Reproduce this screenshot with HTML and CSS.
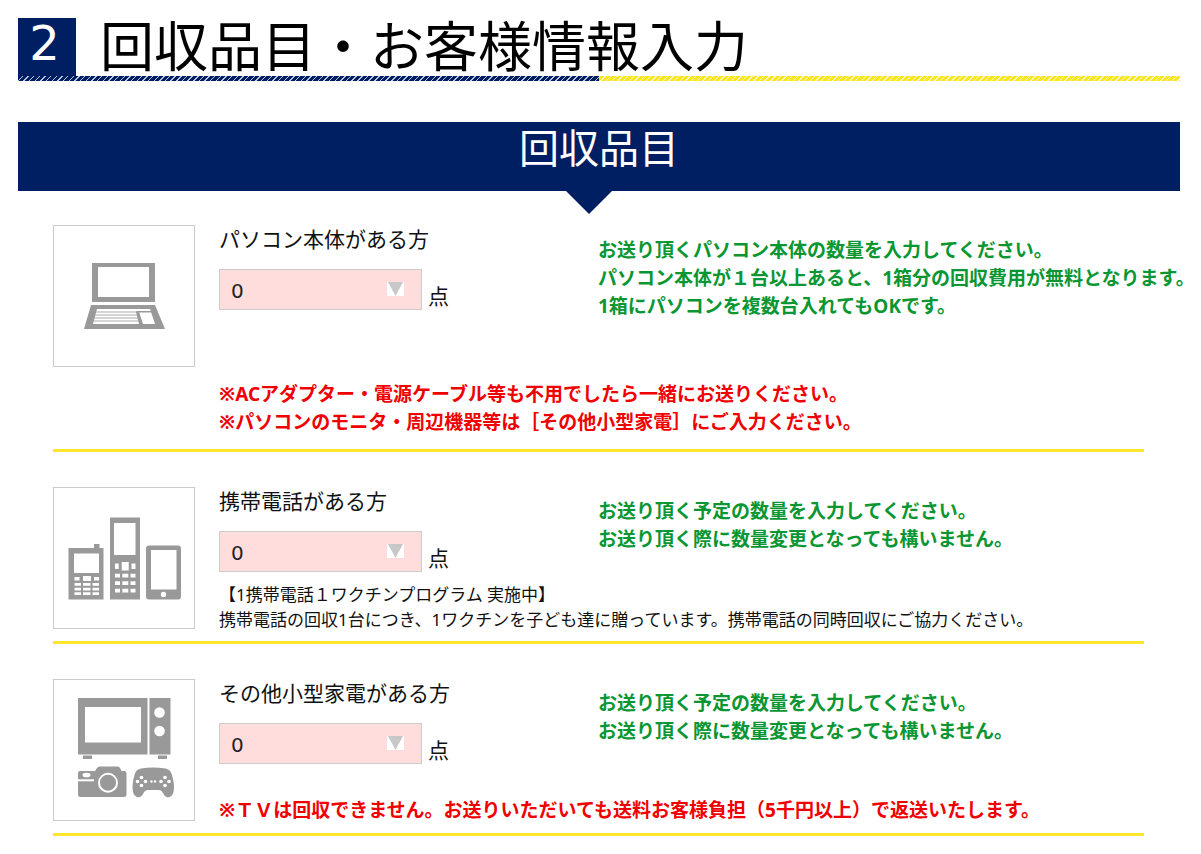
FILE: index.html
```html
<!doctype html>
<html lang="ja">

<head>
  <meta charset="UTF-8">
  <meta name="viewport" content="width=device-width, initial-scale=1">
  <title>回収品目・お客様情報入力</title>
  <link rel="stylesheet" href="styles.css">
</head>

<body>
  <main class="page">
    <h1 class="step">
      <span class="step-num">2</span>
      <span class="step-title">回収品目・お客様情報入力</span>
    </h1>

    <h2 class="banner">回収品目</h2>

    <form class="items">
      <!-- PC -->
      <section class="item item-tall">
        <div class="item-icon">
          <svg viewBox="1 1 140 140" aria-hidden="true">
            <path class="ink" fill-rule="evenodd" d="M39 38h63v39H39zM45 42v30h51V42z" />
            <path class="ink" d="M38 80h64l10 24H31z" />
            <path class="paper" d="M44 84h53l5 15H40z" />
            <path class="keys" d="M43 87h41M42 90h43M41 93h45M41 96h46" />
            <path class="ink" d="M83 87h3l4 12h-4z" />
            <path class="ink" d="M83 86h15l.5 1.500H84z" />
          </svg>
        </div>
        <div class="item-main">
          <label class="item-name" for="pc">パソコン本体がある方</label>
          <div class="field">
            <div class="select">
              <select id="pc">
                <option>0</option>
                <option>1</option>
                <option>2</option>
                <option>3</option>
              </select>
              <svg class="arrow" viewBox="0 0 17 14" aria-hidden="true"><path d="M1 0h15L8.500 14z" /></svg>
            </div>
            <span class="unit">点</span>
          </div>
        </div>
        <p class="hint">お送り頂くパソコン本体の数量を入力してください。<br>パソコン本体が１台以上あると、1箱分の回収費用が無料となります。<br>1箱にパソコンを複数台入れてもOKです。</p>
        <p class="note alert">※ACアダプター・電源ケーブル等も不用でしたら一緒にお送りください。<br>※パソコンのモニタ・周辺機器等は［その他小型家電］にご入力ください。</p>
      </section>

      <!-- Mobile phone -->
      <section class="item">
        <div class="item-icon">
          <svg viewBox="1 1 140 140" aria-hidden="true">
            <path class="ink" d="M15.500 61H41v-4h5.500v4h4v51.500h-35zM57 30.500h30v82H57z" />
            <rect class="ink" x="93" y="58.500" width="35" height="54" rx="3" />
            <path class="paper" d="M21 66.500h25V86H21zM61 36h21.500v32H61zM98 63h25.500v39.500H98z" />
            <circle class="paper" cx="110.500" cy="107.500" r="2.700" />
            <!-- left keypad -->
            <path class="paper" d="M21.500 90h5v3.500h-5zM30 89h8v5h-8zM41 90h5v3.500h-5z
              M21.500 96h6.500v2.700h-6.500zM30 96h7.500v2.700H30zM39.500 96H46v2.700h-6.500z
              M21.500 100.700h6.500v2.700h-6.500zM30 100.700h7.500v2.700H30zM39.500 100.700H46v2.700h-6.500z
              M21.500 105.300h6.500v2.700h-6.500zM30 105.300h7.500v2.700H30zM39.500 105.300H46v2.700h-6.500z" />
            <!-- centre keypad -->
            <path class="paper" d="M62 76.500h3.700V82H62zM68.700 75h7v8.500h-7zM78.500 76.500h4V82h-4z
              M62 86.700h5v3.700h-5zM69.300 86.700h6v3.700h-6zM77.500 86.700h5v3.700h-5z
              M62 94.200h5v3.700h-5zM69.300 94.200h6v3.700h-6zM77.500 94.200h5v3.700h-5z
              M62 101.700h5v3.700h-5zM69.300 101.700h6v3.700h-6zM77.500 101.700h5v3.700h-5z" />
          </svg>
        </div>
        <div class="item-main">
          <label class="item-name" for="mobile">携帯電話がある方</label>
          <div class="field">
            <div class="select">
              <select id="mobile">
                <option>0</option>
                <option>1</option>
                <option>2</option>
                <option>3</option>
              </select>
              <svg class="arrow" viewBox="0 0 17 14" aria-hidden="true"><path d="M1 0h15L8.500 14z" /></svg>
            </div>
            <span class="unit">点</span>
          </div>
        </div>
        <p class="hint">お送り頂く予定の数量を入力してください。<br>お送り頂く際に数量変更となっても構いません。</p>
        <p class="note">【1携帯電話１ワクチンプログラム 実施中】<br>携帯電話の回収1台につき、1ワクチンを子ども達に贈っています。携帯電話の同時回収にご協力ください。</p>
      </section>

      <!-- Other small appliances -->
      <section class="item">
        <div class="item-icon">
          <svg viewBox="1 1 140 140" aria-hidden="true">
            <path class="ink" d="M25 19h69.500v56.500H25zM96.500 19h21v56.500h-21zM30 76.500h9V80h-9zM105 76.500h9V80h-9z" />
            <path class="paper" d="M32 28h56v35.500H32z" />
            <circle class="paper" cx="106.500" cy="33.500" r="5.300" />
            <circle class="paper" cx="106.500" cy="52" r="5.300" />
            <!-- camera -->
            <path class="ink" d="M27 92h15l2-3q1-1.500 2.500-1.500h18q2 0 2.500 1.500l1.500 3H71q2.500 0 2.500 2.500v21q0 2.500-2.500 2.500H27.500q-2.500 0-2.500-2.500V94q0-2 2-2z" />
            <ellipse class="paper" cx="33.500" cy="96" rx="4" ry="2.300" />
            <path class="line" d="M25 101.300h16" />
            <circle class="line" cx="55" cy="103.700" r="9" />
            <!-- game pad -->
            <path class="ink" d="M88 89.500q12-2 24.500 0c4 1 5.500 3 6.500 6.500 2 7 2.500 12 1.500 17-1 5-6 7-9 3.500l-2.500-4q-1-1.500-3-1.500H94.500q-2 0-3 1.500l-2.500 4c-3 3.500-8 1.500-9-3.500-1-5-.5-10 1.500-17 1-3.500 2.500-5.500 6.500-6.500z" />
            <g class="paper">
              <circle cx="88.500" cy="98.500" r="1.800" />
              <circle cx="84.500" cy="102.500" r="1.800" />
              <circle cx="92.500" cy="102.500" r="1.800" />
              <circle cx="88.500" cy="106.500" r="1.800" />
              <circle cx="112" cy="98.500" r="1.800" />
              <circle cx="108" cy="102.500" r="1.800" />
              <circle cx="116" cy="102.500" r="1.800" />
              <circle cx="112" cy="106.500" r="1.800" />
              <circle cx="98.500" cy="102.500" r="1.200" />
              <circle cx="102" cy="102.500" r="1.200" />
            </g>
          </svg>
        </div>
        <div class="item-main">
          <label class="item-name" for="other">その他小型家電がある方</label>
          <div class="field">
            <div class="select">
              <select id="other">
                <option>0</option>
                <option>1</option>
                <option>2</option>
                <option>3</option>
              </select>
              <svg class="arrow" viewBox="0 0 17 14" aria-hidden="true"><path d="M1 0h15L8.500 14z" /></svg>
            </div>
            <span class="unit">点</span>
          </div>
        </div>
        <p class="hint">お送り頂く予定の数量を入力してください。<br>お送り頂く際に数量変更となっても構いません。</p>
        <p class="note alert">※ＴＶは回収できません。お送りいただいても送料お客様負担（5千円以上）で返送いたします。</p>
      </section>
    </form>
  </main>
</body>

</html>
```
FILE: styles.css
```css
* {
  box-sizing: border-box;
}

body {
  margin: 0;
  background: #fff;
  color: #111;
  font-family: "Noto Sans", "Noto Sans CJK JP", sans-serif;
}

h1,
h2,
p {
  margin: 0;
  font-weight: normal;
}

.page {
  padding: 18px 21px 18px 18px;
}

/* Step heading, the rule below is striped: navy half, yellow half */

.step {
  display: flex;
  gap: 24px;
  padding-bottom: 5px;
  line-height: 56px;
  background:
    repeating-linear-gradient(135deg, transparent 0 3px, rgba(255, 255, 255, 0.75) 3px 4px) bottom / 100% 5px no-repeat,
    linear-gradient(90deg, #001e62 50%, #f7e620 50%) bottom / 100% 5px no-repeat;
}

.step-num {
  flex: none;
  width: 58px;
  height: 58px;
  padding-right: 5px;
  background: #001e62;
  color: #fff;
  font-family: "DejaVu Sans", sans-serif;
  font-size: 48px;
  line-height: 50px;
  text-align: center;
}

.step-title {
  height: 58px;
  color: #000;
  font-size: 54px;
}

.banner {
  position: relative;
  height: 69px;
  margin-top: 41px;
  background: #001e62;
  color: #fff;
  font-size: 40px;
  line-height: 52px;
  text-align: center;
}

.banner::after {
  content: "";
  position: absolute;
  top: 100%;
  left: calc(50% - 10px);
  border: 23px solid transparent;
  border-top-color: #001e62;
  border-bottom: 0;
  transform: translateX(-50%);
}

/* Items */

.items {
  padding: 34px 36px 0 35px;
}

.item {
  display: grid;
  grid-template-columns: 142px 355px 1fr;
  grid-template-rows: auto 1fr;
  column-gap: 24px;
  margin-bottom: 35px;
  padding-bottom: 9px;
  border-bottom: 3px solid #fae62d;
}

.item-icon {
  grid-row: 1 / 3;
  height: 142px;
  border: 1px solid #ccc;
}

.item-icon svg {
  display: block;
  width: 140px;
  height: 140px;
}

.ink {
  fill: #999;
}

.paper {
  fill: #fff;
}

.keys {
  stroke: #aaa;
  stroke-width: 1;
}

.line {
  fill: none;
  stroke: #fff;
  stroke-width: 2;
}

.item-name {
  display: block;
  margin-bottom: 16px;
  font-size: 21px;
  line-height: 28px;
}

.field {
  display: flex;
  align-items: flex-end;
  gap: 6px;
}

.select {
  position: relative;
  width: 203px;
}

.select select {
  display: block;
  width: 100%;
  height: 41px;
  padding: 3px 11px 0;
  appearance: none;
  border: 1px solid #ccc;
  border-radius: 0;
  background: #fdd;
  color: #222;
  font: 20px "DejaVu Sans", sans-serif;
}

.arrow {
  position: absolute;
  top: 13px;
  right: 18px;
  width: 17px;
  height: 14px;
  background: #fff;
  fill: #c8c8c8;
  pointer-events: none;
}

.unit {
  font-size: 21px;
  line-height: 28px;
}

.hint {
  padding-top: 10px;
  color: #0a9632;
  font-size: 19px;
  font-weight: bold;
  line-height: 28px;
  white-space: nowrap;
}

.note {
  grid-column: 2 / 4;
  align-self: end;
  padding-top: 10px;
  font-size: 17px;
  line-height: 25px;
}

.note.alert {
  padding-top: 32px;
  color: #f00000;
  font-size: 19px;
  font-weight: bold;
  line-height: 28px;
}

/* The hint runs to three lines, so the note drops below the icon */

.item-tall {
  padding-bottom: 13px;
}

.item-tall .item-icon {
  grid-row: 1;
}

.item-tall .hint {
  padding-top: 11px;
}

.item-tall .note.alert {
  padding-top: 13px;
}
```
